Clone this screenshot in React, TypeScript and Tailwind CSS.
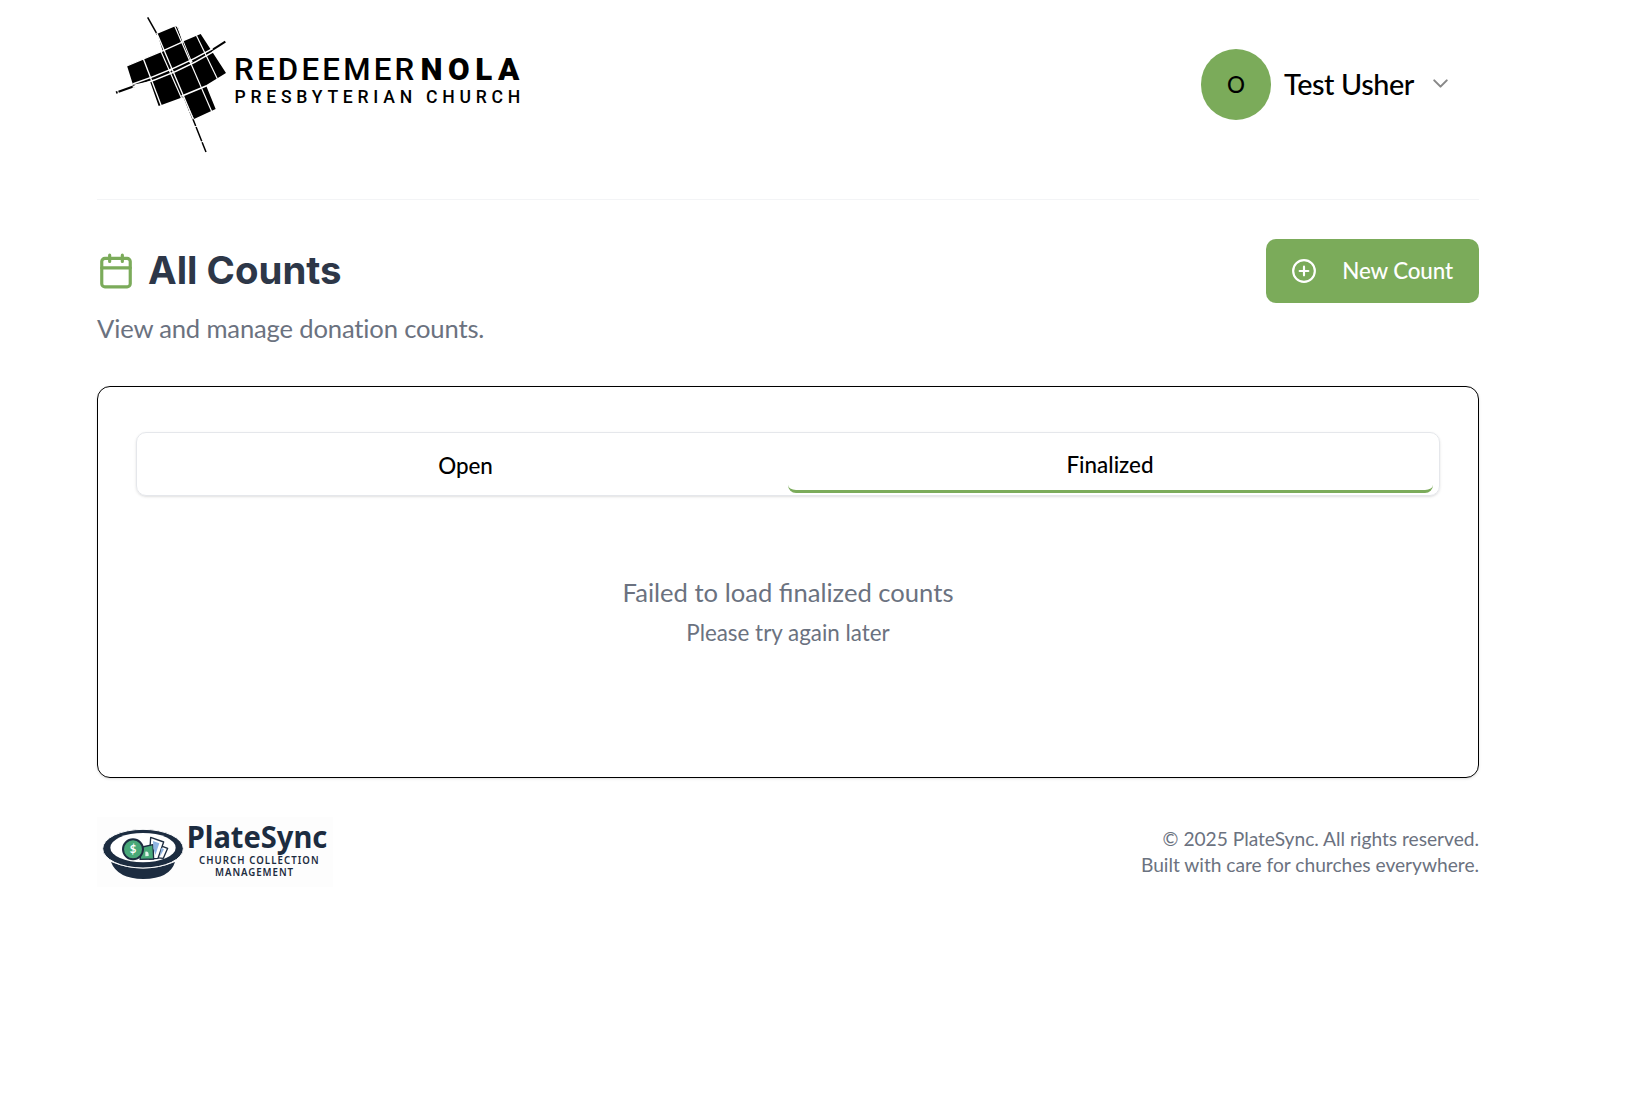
import React from "react";
import { ChevronDown } from "lucide-react";

function ChurchLogo() {
  return (
    <svg width="450" height="160" viewBox="0 0 450 160" className="block shrink-0 overflow-visible" role="img" aria-label="Redeemer NOLA Presbyterian Church">
      <g transform="scale(0.33333)">
        <path d="M172 101 L226 79 L234 82 L247 125 L302 102 L378 219 L318 256 L347 327 L282 357 L252 290 L176 318 L150 244 L99 254 L81 197 L188 152 Z" fill="#000" />
        <g stroke="#000" fill="none">
          <path d="M143 52 L172 104" strokeWidth="4.5" />
          <path d="M252 290 L318 456" strokeWidth="4.5" strokeDasharray="46 3" />
          <path d="M48 278 L104 258" strokeWidth="7" strokeDasharray="5 3 80" />
          <path d="M330 154 L376 125" strokeWidth="6" />
        </g>
        <g stroke="#fff" fill="none" strokeWidth="4">
          <path d="M170 98 L280 358" />
          <path d="M182 152 L248 302" strokeWidth="3.5" />
          <path d="M130 176 L184 318" />
          <path d="M224 78 L336 337" strokeWidth="3.5" />
          <path d="M232 80 L274 184" strokeWidth="3" />
          <path d="M289 106 L352 236" strokeWidth="3.5" />
          <path d="M80 198 L190 152 L250 125" />
          <path d="M98 252 Q230 208 338 146" strokeWidth="4.5" />
          <path d="M98 262 Q235 220 342 154" strokeWidth="4.5" />
          <path d="M244 289 L320 257" strokeWidth="5" />
        </g>
        <circle cx="272" cy="184" r="5" fill="#fff" />
        <circle cx="211" cy="210" r="4" fill="#fff" />
      </g>
      <g fill="#000" fontFamily="Roboto, sans-serif">
        <text x="134" y="79.700" fontSize="31" fontWeight="500" textLength="183.500" lengthAdjust="spacingAndGlyphs" letterSpacing="3.200">REDEEMER</text>
        <text x="320.500" y="79.700" fontSize="31" fontWeight="900" textLength="104.500" lengthAdjust="spacingAndGlyphs" letterSpacing="5.500">NOLA</text>
        <text x="134.500" y="102.900" fontSize="18.500" fontWeight="500" textLength="290.500" lengthAdjust="spacingAndGlyphs" letterSpacing="5">PRESBYTERIAN CHURCH</text>
      </g>
    </svg>
  );
}

function PlateSyncLogo() {
  return (
    <svg width="236" height="70" viewBox="21 171 708 210" className="block shrink-0 overflow-visible bg-[#fdfdfd]" role="img" aria-label="PlateSync">
      <path d="M63 306 Q160 345 255 306 Q240 356 160 357 Q82 356 63 306 Z" fill="#1c2c40" />
      <ellipse cx="159" cy="266" rx="121" ry="58" fill="#1c2c40" stroke="#fdfdfd" strokeWidth="3" />
      <ellipse cx="159" cy="263" rx="98" ry="44" fill="#fff" />
      <g stroke="#1c2c40" strokeWidth="4" strokeLinejoin="round">
        <path d="M209 256 L233 265 L220 295 L196 293 Z" fill="#fff" />
        <path d="M182 232 L221 246 L204 295 L178 297 Z" fill="#fff" />
        <path d="M157 261 L189 254 L191 297 L150 298 Z" fill="#48a878" />
      </g>
      <path d="M189 243 L208 250 L196 285 L190 265 Z" fill="#8fb5e3" />
      <path d="M213 264 L222 268 L210 289 Z" fill="#8fb5e3" />
      <path d="M166 275 Q177 273 176 288 L166 289 Z" fill="#e3f3ea" />
      <circle cx="129" cy="268" r="30" fill="#48a878" stroke="#1c2c40" strokeWidth="6" />
      <text x="129" y="280" textAnchor="middle" fontSize="34" fontWeight="700" fontFamily="Lato, sans-serif" fill="#fff">$</text>
      <g fill="#1c2c40" fontFamily="'Noto Sans', sans-serif">
        <text x="290" y="263" fontSize="92" fontWeight="700" textLength="422" lengthAdjust="spacingAndGlyphs">PlateSync</text>
        <text x="327" y="312" fontSize="31" fontWeight="600" textLength="362" lengthAdjust="spacingAndGlyphs" letterSpacing="3.500">CHURCH COLLECTION</text>
        <text x="375" y="348" fontSize="31" fontWeight="600" textLength="237" lengthAdjust="spacingAndGlyphs" letterSpacing="3">MANAGEMENT</text>
      </g>
    </svg>
  );
}

function CalendarIcon() {
  return (
    <svg width="38" height="38" viewBox="0 0 24 24" fill="none" stroke="#7bab5a" strokeWidth="2" strokeLinecap="round" strokeLinejoin="round" className="shrink-0">
      <path d="M8 2v4M16 2v4M3 10h18" />
      <rect x="3" y="4" width="18" height="18" rx="2" />
    </svg>
  );
}

function PlusCircleIcon() {
  return (
    <svg width="26" height="26" viewBox="0 0 24 24" fill="none" stroke="currentColor" strokeWidth="2" strokeLinecap="round" strokeLinejoin="round" className="shrink-0">
      <circle cx="12" cy="12" r="10" />
      <path d="M8 12h8M12 8v8" />
    </svg>
  );
}

export default function App() {
  return (
    <div className="min-h-[1096px] bg-white pl-[97px] font-[Lato,sans-serif]">
      <div className="w-[1382px]">
        <header className="flex h-[200px] items-start justify-between border-b border-[#f3f4f6]">
          <div className="pl-[3px]">
            <ChurchLogo />
          </div>
          <div className="mt-[49px] mr-[26px] flex items-center">
            <div className="flex h-[71px] w-[70px] items-center justify-center rounded-full bg-[#7bab5a] text-[22.400px] font-medium text-black">
              <span>O</span>
            </div>
            <span className="-mt-[2px] ml-[13px] text-[28.800px] leading-[40px] font-medium tracking-[-0.400px] whitespace-nowrap text-black">Test Usher</span>
            <ChevronDown className="-mt-[2px] ml-[14px]" size={25} strokeWidth={2} color="#888888" />
          </div>
        </header>

        <main>
          <div className="mt-[39px] flex h-[64px] items-center justify-between">
            <div className="flex items-center gap-[13px]">
              <CalendarIcon />
              <h1 className="-mt-[2px] text-[38.400px] leading-[46px] font-bold text-[#2d3748] font-[Inter,sans-serif]">All Counts</h1>
            </div>
            <button className="flex h-[64px] w-[213px] items-center justify-between rounded-[10px] bg-[#7bab5a] pr-[26px] pl-[25px] text-[22.400px] font-medium tracking-[-0.120px] text-white">
              <PlusCircleIcon />
              <span>New Count</span>
            </button>
          </div>
          <p className="mt-[7px] text-[25.600px] leading-[36px] tracking-[-0.160px] text-[#6b7280]">View and manage donation counts.</p>

          <section className="mt-[40px] h-[392px] rounded-[13px] border border-black px-[38px] pt-[45px] shadow-sm">
            <div className="grid h-[64px] grid-cols-2 rounded-[10px] border border-[#e5e7eb] p-[6px] pb-[2px] text-[22.400px] font-medium text-black shadow-sm">
              <button className="flex items-center justify-center pb-px">Open</button>
              <button className="flex items-center justify-center rounded-[8px] border-b-[3px] border-[#7bab5a] pr-px">Finalized</button>
            </div>
            <div className="mt-[78px] text-center text-[#6b7280]">
              <p className="text-[25.600px] leading-[36px]">Failed to load finalized counts</p>
              <p className="mt-[7px] text-[22.400px] leading-[32px]">Please try again later</p>
            </div>
          </section>
        </main>

        <footer className="mt-[39px] flex items-start justify-between">
          <PlateSyncLogo />
          <div className="mt-[9px] text-right text-[19.200px] leading-[26px] tracking-[-0.020px] text-[#6b7280]">
            <p>© 2025 PlateSync. All rights reserved.</p>
            <p>Built with care for churches everywhere.</p>
          </div>
        </footer>
      </div>
    </div>
  );
}
